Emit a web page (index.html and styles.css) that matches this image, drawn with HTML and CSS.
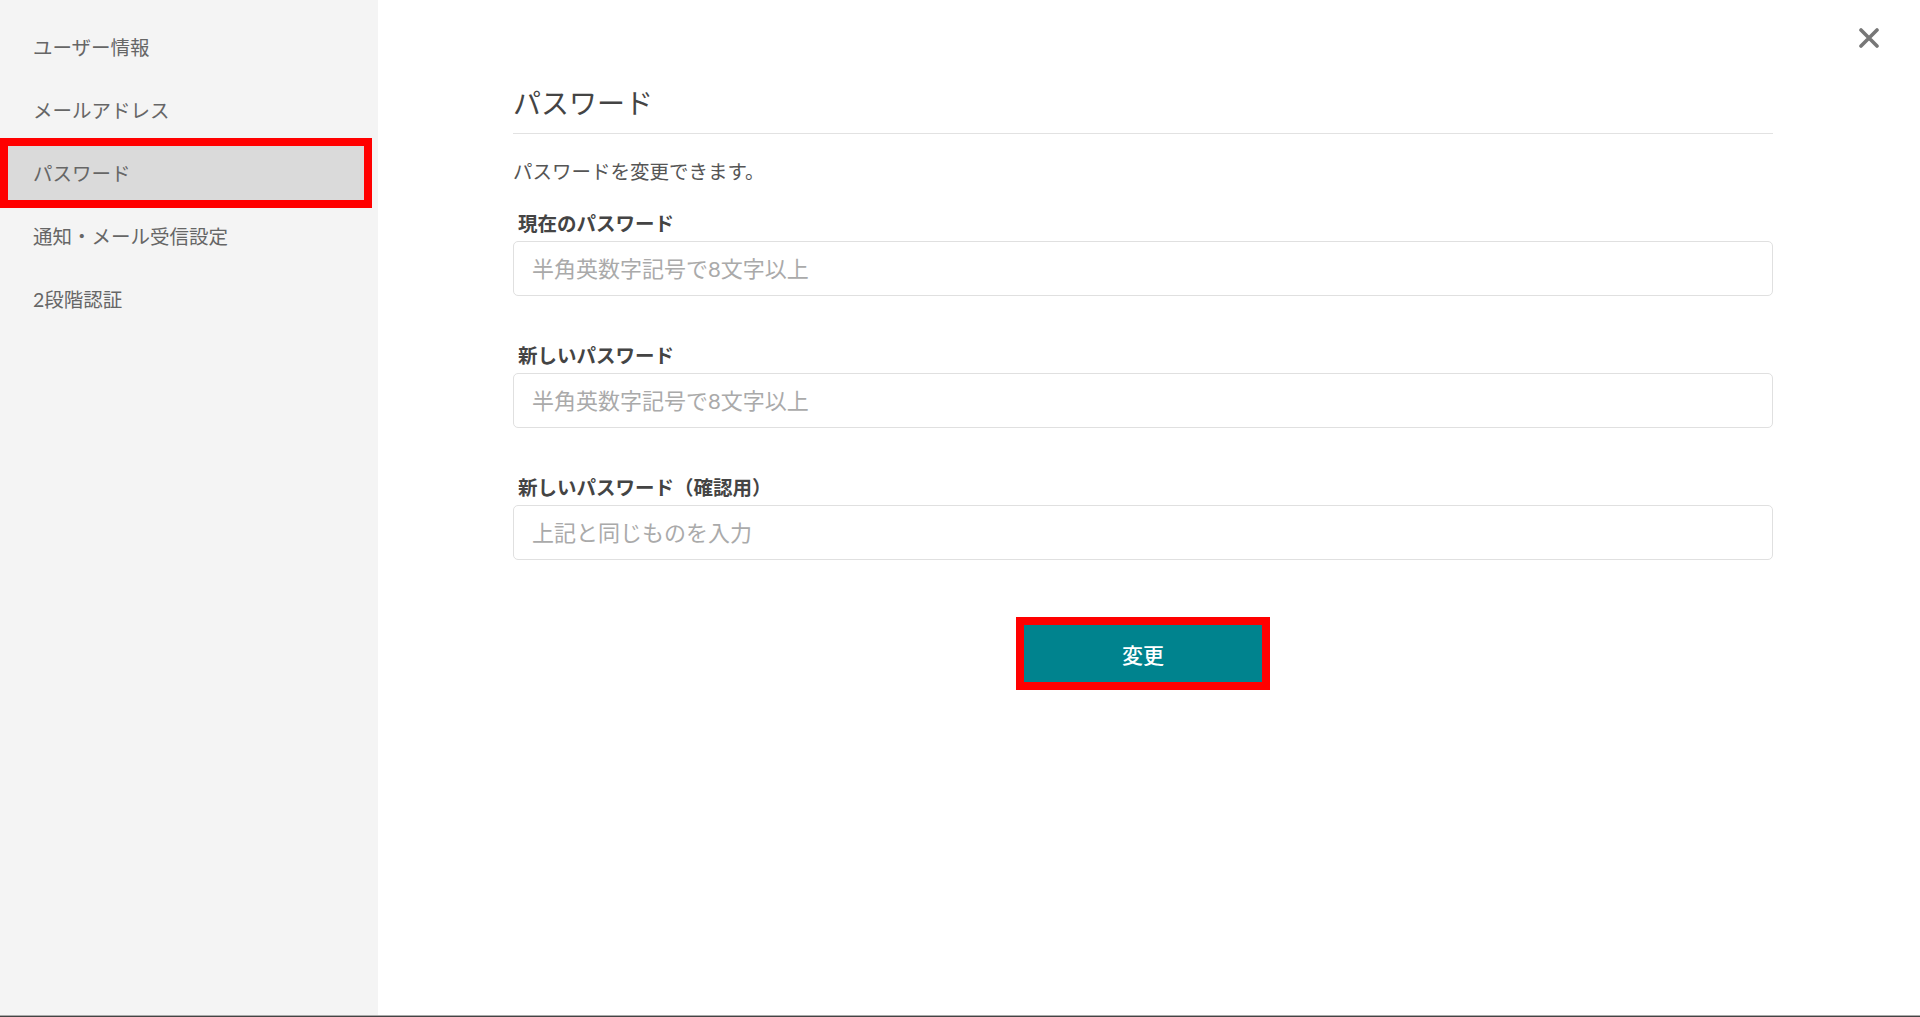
FILE: index.html
```html
<!DOCTYPE html>
<html lang="ja">
<head>
  <meta charset="UTF-8">
  <title>アカウント設定 - パスワード</title>
  <link rel="stylesheet" href="styles.css">
</head>
<body>

<div class="layout">
  <div class="sidebar">
    <a href="#">ユーザー情報</a>
    <a href="#">メールアドレス</a>
    <a href="#" class="active">パスワード</a>
    <a href="#">通知・メール受信設定</a>
    <a href="#">2段階認証</a>
  </div>

  <div class="main">
    <a href="#" class="close" aria-label="閉じる">
      <svg width="20" height="20" viewBox="0 0 20 20">
        <path d="M2 2 L18 18 M18 2 L2 18" stroke="#777" stroke-width="3.6" stroke-linecap="round"/>
      </svg>
    </a>

    <div class="panel">
      <h1>パスワード</h1>
      <p class="lead">パスワードを変更できます。</p>

      <div class="field">
        <label for="current">現在のパスワード</label>
        <input type="password" id="current" placeholder="半角英数字記号で8文字以上">
      </div>
      <div class="field">
        <label for="new">新しいパスワード</label>
        <input type="password" id="new" placeholder="半角英数字記号で8文字以上">
      </div>
      <div class="field">
        <label for="confirm">新しいパスワード（確認用）</label>
        <input type="password" id="confirm" placeholder="上記と同じものを入力">
      </div>

      <div class="actions">
        <button class="btn" type="button">変更</button>
      </div>
    </div>
  </div>
</div>
<div class="bottom-bar"></div>

</body>
</html>
```

FILE: styles.css
```css
* {
  box-sizing: border-box;
  margin: 0;
  padding: 0;
}
body {
  font-family: Lato, "Noto Sans CJK JP", sans-serif;
  display: flex;
  flex-direction: column;
  height: 1017px;
  background: #ffffff;
  overflow: hidden;
}
.layout {
  flex: 1;
  display: flex;
}
.sidebar {
  width: 378px;
  background: #f4f4f4;
  padding-top: 15px;
}
.sidebar a {
  display: flex;
  align-items: center;
  height: 63px;
  padding-left: 33px;
  font-size: 19.5px;
  color: #666;
  text-decoration: none;
  position: relative;
}
.sidebar a.active {
  background: #dadada;
  margin-right: 6px;
}
.sidebar a.active::after {
  content: "";
  position: absolute;
  top: -3px;
  bottom: -4px;
  left: 0;
  right: 0;
  border: 8px solid #ff0000;
}
.main {
  flex: 1;
  position: relative;
  padding: 83px 0 0 135px;
}
.close {
  position: absolute;
  top: 28px;
  right: 41px;
  width: 20px;
  height: 20px;
  display: block;
}
.close svg {
  display: block;
}
.panel {
  width: 1260px;
}
h1 {
  font-size: 28px;
  font-weight: 400;
  line-height: 40px;
  color: #444;
  padding-bottom: 10px;
  border-bottom: 1px solid #e2e2e2;
}
.lead {
  margin-top: 23px;
  font-size: 19.5px;
  line-height: 30px;
  color: #555;
}
.field {
  margin-top: 23px;
}
.field + .field {
  margin-top: 46px;
}
.field label {
  display: block;
  padding-left: 5px;
  font-size: 19.5px;
  font-weight: 700;
  line-height: 28px;
  color: #444;
  margin-bottom: 3px;
}
.field input {
  display: block;
  width: 100%;
  height: 55px;
  padding: 0 18px;
  border: 1px solid #e0e0e0;
  border-radius: 5px;
  font-family: inherit;
  font-size: 22px;
  color: #444;
  background: #fff;
}
.field input::placeholder {
  color: #aaa;
}
.actions {
  display: flex;
  justify-content: center;
  margin-top: 65px;
}
.btn {
  width: 238px;
  height: 57px;
  border: none;
  background: #00838e;
  color: #fff;
  font-family: inherit;
  font-size: 21px;
  font-weight: 500;
  cursor: pointer;
  outline: 8px solid #ff0000;
}
.bottom-bar {
  height: 2px;
  background: #444;
  border-top: 1px solid #aaa;
}
```
